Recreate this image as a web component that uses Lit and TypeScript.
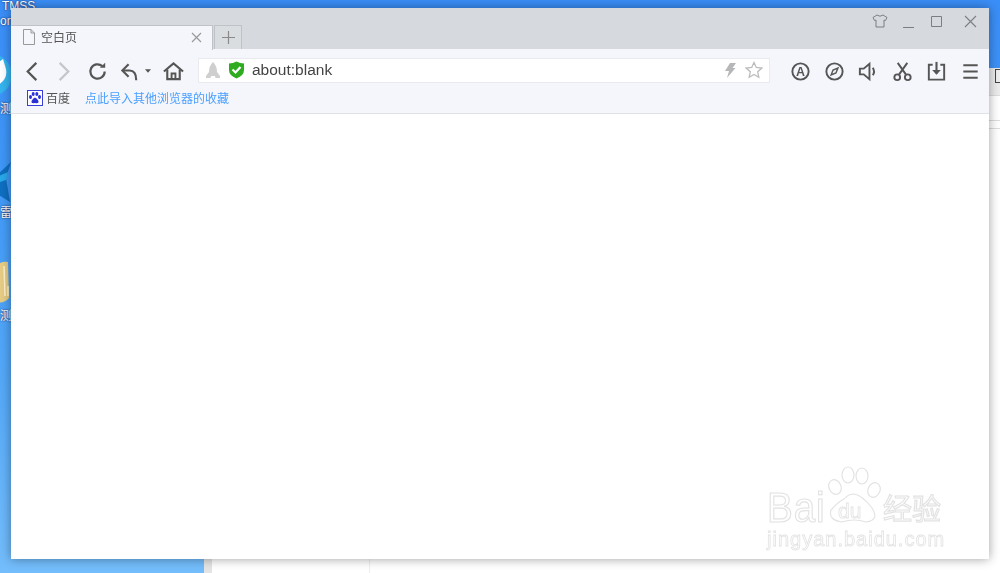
import { LitElement, html, css, svg } from "lit";
import { customElement } from "lit/decorators.js";

const ico = (body: unknown) => html`<svg class="ico" viewBox="0 0 24 24" fill="none" stroke="currentColor" stroke-width="2">${body}</svg>`;

@customElement("app-root")
export class AppRoot extends LitElement {
  static styles = css`
    :host { display: block; font-family: "Noto Sans CJK SC", "Liberation Sans", sans-serif; }
    .desktop { position: relative; width: 1000px; height: 573px; overflow: hidden;
      background: linear-gradient(180deg, #3a8ef8 0%, #3f97f6 30%, #57aaf8 70%, #74bdfb 100%); }
    .behind { position: absolute; left: 204px; top: 68px; right: 0; bottom: 0; background: #fff; border-left: 8px solid #e4e4e4; }
    .behind .bar { position: absolute; left: 0; right: 0; top: 0; height: 27px; background: #ececec; border-bottom: 1px solid #ddd; }
    .behind .ln { position: absolute; left: 0; right: 0; top: 52px; height: 1px; background: #ddd; }
    .behind .ln2 { position: absolute; left: 0; right: 0; top: 60px; height: 1px; background: #ddd; }
    .behind .sq { position: absolute; right: 0; top: 1px; width: 4px; height: 12px; border: 1.500px solid #444; border-right: 0; background: #eee; }
    .behind .vl { position: absolute; left: 157px; bottom: 0; height: 14px; width: 1px; background: #eee; }
    .dtxt { position: absolute; left: 0; color: #fff; font-size: 12px; line-height: 13px; text-shadow: 0 0 2px #113; white-space: nowrap; font-family: "Liberation Sans", "Noto Sans CJK SC", sans-serif; }
    .t1 { left: 2px; top: 0; }
    .t2 { top: 15px; }
    .t3 { top: 207px; }
    .t4 { top: 310px; }
    .t5 { top: 103px; }
    .dicon { position: absolute; left: 0; width: 12px; }
    .bird { top: 53px; height: 44px; }
    .star { top: 158px; height: 46px; }
    .folder { top: 260px; height: 44px; }

    .win { position: absolute; left: 11px; top: 8px; width: 978px; height: 551px; background: #fff; display: flex; flex-direction: column;
      box-shadow: 0 0 10px rgba(0,0,0,.38); filter: blur(.35px); }
    .title { height: 41px; background: #d6dade; display: flex; align-items: flex-end; position: relative; flex: none; }
    .tab { width: 202px; height: 25px; box-sizing: border-box; background: #f5f6fb; border-top: 1px solid #bfc3c7; border-right: 1px solid #bfc3c7; display: flex; align-items: center; padding: 0 10px 2px 12px; color: #555; font-size: 12px; margin-bottom: -1px; position: relative; }
    .tab .name { margin: 0 0 1px 6px; flex: 1; }
    .page { width: 12px; height: 16px; color: #999; flex: none; }
    .x { width: 11px; height: 11px; color: #999; flex: none; }
    .new { width: 28px; height: 24px; box-sizing: border-box; margin-left: 1px; border: 1px solid #bfc3c7; border-bottom: 0; background: #dadde0; display: flex; align-items: center; justify-content: center; }
    .new svg { width: 13px; height: 13px; color: #8a8a8a; }
    .ctrls { position: absolute; right: 11px; top: 5px; display: flex; align-items: center; color: #7b7f83; }
    .ctrls svg { display: block; width: 16px; height: 16px; margin-left: 12px; }
    .ctrls svg.cl { margin-left: 18px; }

    .tool { height: 28px; padding: 8px 2px 0 5px; background: #f5f6fb; display: flex; align-items: center; flex: none; color: #555; }
    .b { width: 32px; height: 28px; display: flex; align-items: center; justify-content: center; flex: none; }
    .b.fwd { width: 31px; }
    .b.reload { width: 36px; }
    .b.undo { width: 30px; }
    .b.caret { width: 6px; }
    .b.home { width: 45px; }
    .b.r { width: 34px; }
    .fwd { color: #c4c6c9; }
    .ico { width: 23px; height: 23px; display: block; }
    .addr { flex: 1; height: 25px; box-sizing: border-box; margin: 0 13px 2px 2px; border: 1px solid #e9eaee; background: #fff; display: flex; align-items: center; padding: 0 6px 0 7px; color: #444; font-family: "Liberation Sans", sans-serif; font-size: 15.500px; }
    .addr .rocket { width: 14px; height: 17px; color: #cfcfcf; flex: none; }
    .addr .shield { width: 17px; height: 18px; margin-left: 8px; flex: none; }
    .addr .url { margin-left: 7px; flex: 1; }
    .addr .bolt { width: 12px; height: 15px; color: #b5b7b9; flex: none; }
    .addr .fav { width: 18px; height: 18px; color: #b9bbbd; margin-left: 9px; flex: none; }

    .marks { height: 25px; background: #f5f6fb; border-bottom: 1px solid #dfe1e5; display: flex; align-items: center; padding: 0 0 3px 16px; font-size: 12px; color: #555; flex: none; }
    .pawbox { width: 16px; height: 16px; box-sizing: border-box; border: 1px solid #3a3fd8; background: #fff; flex: none; display: flex; align-items: center; justify-content: center; }
    .pawbox svg { width: 14px; height: 14px; display: block; }
    .marks .bd { margin-left: 3px; }
    .marks .imp { margin-left: 15px; color: #4a9fff; }
    .content { flex: 1; background: #fff; position: relative; }
    .atxt { font: 700 13px "Liberation Sans", sans-serif; fill: currentColor; stroke: none; }

    .wm { position: absolute; left: 757px; top: 456px; width: 190px; height: 100px; pointer-events: none; filter: blur(.4px); }
    .wm span { position: absolute; white-space: nowrap; color: #fff; -webkit-text-stroke: 1.200px #e3e3e3; font-family: "Liberation Sans", "Noto Sans CJK SC", sans-serif; line-height: 1; }
    .wm .bai { left: 10px; top: 31px; font-size: 42px; letter-spacing: 1px; transform: scaleX(.92); transform-origin: left top; }
    .wm .du { left: 81px; top: 44px; font-size: 21px; -webkit-text-stroke: .8px #e3e3e3; }
    .wm .jy { left: 126px; top: 37px; font-size: 29px; font-family: "Noto Sans CJK SC", sans-serif; }
    .wm .url { left: 10px; top: 73px; font-size: 20px; letter-spacing: 1px; -webkit-text-stroke: .8px #e3e3e3; }
    .wm svg { position: absolute; left: 71px; top: 10px; width: 54px; height: 58px; }
  `;

  render() {
    return html`<div class="desktop">
      <div class="behind"><div class="bar"></div><div class="sq"></div><div class="ln"></div><div class="ln2"></div><div class="vl"></div></div>
      <div class="dtxt t1">TMSS</div><div class="dtxt t2">ort</div>
      <div class="dtxt t3">雷石</div><div class="dtxt t4">测试</div><div class="dtxt t5">测试</div>
      <svg class="dicon bird" viewBox="0 0 12 44"><circle cx="-9" cy="22" r="21" fill="#35b4ef"/><path d="M-8 14 L3 6 L6 16 Q8 26 -2 32 Z" fill="#fff"/></svg>
      <svg class="dicon star" viewBox="0 0 12 46"><path d="M-6 20 L11 4 L6 20 L10 44 L-6 34Z" fill="#0f6fc0"/><path d="M-6 20 L8 14 L6 22 L-6 26Z" fill="#28a8e8"/></svg>
      <svg class="dicon folder" viewBox="0 0 12 44"><path d="M-4 6 Q0 1 8 2 L9 38 Q4 44 -4 42Z" fill="#e6cc85"/><path d="M4 6 L5 36 M8 26 L8 36" stroke="#fff3cc" stroke-width="1.5"/></svg>

      <div class="win">
        <div class="title">
          <div class="tab">
            <svg class="page" viewBox="0 0 12 16" fill="none" stroke="currentColor"><path d="M.5.5H8L11.5 4V15.5H.5ZM8 .5V4H11.5"/></svg>
            <span class="name">空白页</span>
            <svg class="x" viewBox="0 0 11 11" stroke="currentColor" stroke-width="1.2"><path d="M1 1L10 10M10 1L1 10"/></svg>
          </div>
          <div class="new"><svg viewBox="0 0 13 13" stroke="currentColor" stroke-width="1.2"><path d="M6.5 0V13M0 6.5H13"/></svg></div>
          <div class="ctrls">
            <svg viewBox="0 0 16 16" fill="none" stroke="currentColor"><path d="M5 2L1 4.500l1.500 3L4 7V14H12V7L13.500 7.500 15 4.500 11 2Q8 4.500 5 2Z"/></svg>
            <svg viewBox="0 0 16 16" fill="none" stroke="currentColor"><path d="M3 14.500H14"/></svg>
            <svg viewBox="0 0 16 16" fill="none" stroke="currentColor"><path d="M3.500 3.500H13.500V13.500H3.500Z"/></svg>
            <svg class="cl" viewBox="0 0 16 16" fill="none" stroke="currentColor" stroke-width="1.100"><path d="M3 3L14 14M14 3L3 14"/></svg>
          </div>
        </div>
        <div class="tool">
          <div class="b">${ico(svg`<path d="M16 3L7 12L16 21" stroke-width="2.300"/>`)}</div>
          <div class="b fwd">${ico(svg`<path d="M8 3L17 12L8 21" stroke-width="2.300"/>`)}</div>
          <div class="b reload">${ico(svg`<path d="M19.500 12A7.500 7.500 0 1 1 17 6.400" stroke-width="2.300"/><path d="M14.500 8.200H20V2.800Z" fill="currentColor" stroke="none"/>`)}</div>
          <div class="b undo">${ico(svg`<path d="M10 4.500L3.500 11L10 17.500" stroke-width="2.200"/><path d="M4 11H11Q18 11 18 21" stroke-width="2.200"/>`)}</div>
          <div class="b caret"><svg width="7" height="4" viewBox="0 0 7 4"><path d="M0 0H7L3.500 4Z" fill="currentColor"/></svg></div>
          <div class="b home">${ico(svg`<path d="M2 12L12 3.500L22 12" stroke-width="2.200"/><path d="M5.500 10V20H18.500V10" stroke-width="2.200"/><path d="M10 20V14H14V20" stroke-width="2"/>`)}</div>
          <div class="addr">
            <svg class="rocket" viewBox="0 0 14 17" fill="currentColor"><path d="M7 0Q11 4 11 10L14 14V16H9.500L9 14H5L4.500 16H0V14L3 10Q3 4 7 0Z"/></svg>
            <svg class="shield" viewBox="0 0 17 18"><path d="M8.500 .5Q12 2.500 16 2.500V9Q16 14.500 8.500 17.500Q1 14.500 1 9V2.500Q5 2.500 8.500 .5Z" fill="#2eab1e"/><path d="M4.500 8.500L7.500 11.500L12.500 6" stroke="#fff" stroke-width="2.200" fill="none"/></svg>
            <span class="url">about:blank</span>
            <svg class="bolt" viewBox="0 0 12 15" fill="currentColor"><path d="M6 0H12L8.500 5H11.500L3 15L5 8H1Z"/></svg>
            <svg class="fav" viewBox="0 0 18 18" fill="none" stroke="currentColor" stroke-width="1.300"><path d="M9 1.500L11.300 6.500L16.800 7.100L12.700 10.800L13.800 16.200L9 13.500L4.200 16.200L5.300 10.800L1.200 7.100L6.700 6.500Z"/></svg>
          </div>
          <div class="b r">${ico(svg`<circle cx="12" cy="12" r="8.500" stroke-width="2"/><text class="atxt" x="12" y="16.600" text-anchor="middle">A</text>`)}</div>
          <div class="b r">${ico(svg`<circle cx="12" cy="12" r="8.500" stroke-width="2"/><path d="M15.500 8.500L13.500 13.500L8.500 15.500L10.500 10.500Z" stroke-width="1.500"/>`)}</div>
          <div class="b r">${ico(svg`<path d="M3 9V15H7L13 20V4L7 9Z" stroke-width="2"/><path d="M16.500 8Q19 12 16.500 16" stroke-width="2"/>`)}</div>
          <div class="b r">${ico(svg`<path d="M7 3L15.500 15M17 3L8.500 15" stroke-width="2"/><circle cx="6.500" cy="18" r="3" stroke-width="2"/><circle cx="17.500" cy="18" r="3" stroke-width="2"/>`)}</div>
          <div class="b r">${ico(svg`<path d="M8 5H4V20.500H20V5H16" stroke-width="2"/><path d="M12 2V14" stroke-width="2.200"/><path d="M7.500 10.500H16.500L12 15.500Z" fill="currentColor" stroke="none"/>`)}</div>
          <div class="b r">${ico(svg`<path d="M4.500 5.500H19.500M4.500 12H19.500M4.500 18.500H19.500" stroke-width="2"/>`)}</div>
        </div>
        <div class="marks">
          <div class="pawbox"><svg viewBox="0 0 14 14" fill="#2c30d6"><ellipse cx="2.500" cy="6" rx="1.500" ry="2"/><ellipse cx="5.200" cy="3" rx="1.500" ry="2"/><ellipse cx="8.800" cy="3" rx="1.500" ry="2"/><ellipse cx="11.500" cy="6" rx="1.500" ry="2"/><path d="M7 6.500Q9 7 10.500 10Q11 12.500 8.500 12.300Q7 11.800 5.500 12.300Q3 12.500 3.500 10Q5 7 7 6.500Z"/></svg></div>
          <span class="bd">百度</span>
          <span class="imp">点此导入其他浏览器的收藏</span>
        </div>
        <div class="content"></div>
      </div>

      <div class="wm">
        <svg viewBox="0 0 54 58" fill="#fff" stroke="#e3e3e3" stroke-width="1.200"><ellipse cx="7" cy="21" rx="6" ry="7.500" transform="rotate(-25 7 21)"/><ellipse cx="20" cy="9" rx="6" ry="8"/><ellipse cx="34" cy="10" rx="6" ry="8"/><ellipse cx="46" cy="24" rx="6" ry="7.500" transform="rotate(25 46 24)"/><path d="M26 28Q34 29 44 42Q52 54 38 56Q26 52 14 56Q0 54 3 44Q10 36 16 33Q20 28 26 28Z"/></svg>
        <span class="bai">Bai</span><span class="du">du</span><span class="jy">经验</span>
        <span class="url">jingyan.baidu.com</span>
      </div>
    </div>`;
  }
}
